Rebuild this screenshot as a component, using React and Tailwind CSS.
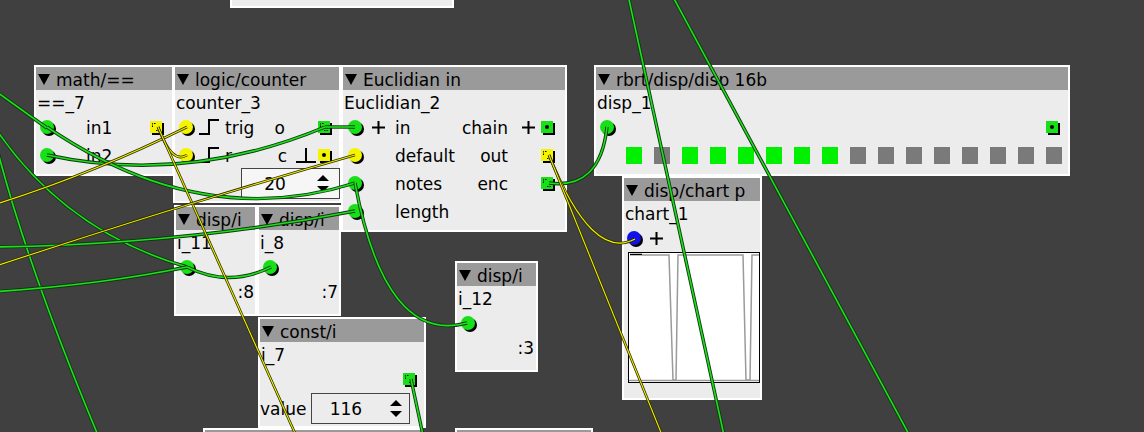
import React from "react";

const GREEN = "bg-[#18e018]";

function Tri() {
  return (
    <svg width="12" height="11" viewBox="0 0 12 11" className="ml-[2px] shrink-0 relative top-[1px]">
      <polygon points="0,0 12,0 6,11" fill="#000" />
    </svg>
  );
}

function T({ children, cls = "" }) {
  return <span className={"relative top-[1px] whitespace-nowrap " + cls}>{children}</span>;
}

function Node({ pos, title, name, children }) {
  return (
    <div className={"absolute flex flex-col bg-[#ececec] border-2 border-white " + pos}>
      <div className="h-[23px] shrink-0 bg-[#9a9a9a] flex items-center whitespace-nowrap overflow-hidden">
        <Tri />
        <span className="ml-[6px] relative top-[2px]">{title}</span>
      </div>
      <div className="h-[23px] shrink-0 flex items-center pl-[1px] whitespace-nowrap">
        <span className="relative top-[2px]">{name}</span>
      </div>
      {children}
    </div>
  );
}

function Inlet({ c }) {
  return <span className={"block w-[14px] h-[14px] rounded-full shrink-0 shadow-[2px_2px_0_#000] " + c} />;
}

function Outlet({ c, dot, cls = "" }) {
  return (
    <span className={"flex items-center justify-center w-[12px] h-[12px] shrink-0 shadow-[2px_2px_0_#000] " + c + " " + cls}>
      {dot ? (
        <span className="block w-[4px] h-[4px] rounded-full bg-black" />
      ) : (
        <svg width="12" height="12" viewBox="0 0 12 12">
          <path d="M2.5 6 V2.5 H6 M6 9.5 H9.5 V6" stroke="#000" strokeWidth="1" fill="none" strokeDasharray="1.5 1" />
        </svg>
      )}
    </span>
  );
}

function Plus({ cls = "" }) {
  return (
    <svg width="13" height="13" viewBox="0 0 13 13" className={"shrink-0 " + cls}>
      <path d="M6.5 0 V13 M0 6.5 H13" stroke="#000" strokeWidth="2" />
    </svg>
  );
}

function StepUp({ cls = "" }) {
  return (
    <svg width="20" height="16" viewBox="0 0 20 16" className={"shrink-0 " + cls}>
      <path d="M0 15 H10 V1 H20" stroke="#000" strokeWidth="2" fill="none" />
    </svg>
  );
}

function StepDown({ cls = "" }) {
  return (
    <svg width="20" height="16" viewBox="0 0 20 16" className={"shrink-0 " + cls}>
      <path d="M0 15 H20 M10 15 V1" stroke="#000" strokeWidth="2" fill="none" />
    </svg>
  );
}

function Arrows() {
  return (
    <svg width="12" height="17" viewBox="0 0 12 17" className="shrink-0">
      <polygon points="0,6 6,0 12,6" fill="#000" />
      <polygon points="0,11 6,17 12,11" fill="#000" />
    </svg>
  );
}

const squares = [1, 0, 1, 1, 1, 1, 1, 1, 0, 0, 0, 0, 0, 0, 0, 0];

function Wire({ d, yellow }) {
  return yellow ? (
    <g>
      <path d={d} stroke="#2a2a00" strokeWidth="2.6" fill="none" />
      <path d={d} stroke="#f0f000" strokeWidth="1.1" fill="none" />
    </g>
  ) : (
    <g>
      <path d={d} stroke="#0b3a0b" strokeWidth="3.4" fill="none" />
      <path d={d} stroke="#20dd20" strokeWidth="1.6" fill="none" />
    </g>
  );
}

const greenWires = [
  "M -20 80 L 47 128",
  "M -10 120 Q 60 230 187 267",
  "M -10 120 Q 20 250 100 440",
  "M 47 155 Q 186 185 325 127",
  "M 47 127 Q 201 232 355 183",
  "M 325 127 L 355 127",
  "M 355 211 Q 180 245 -10 247",
  "M 355 183 Q 385 345 467 323",
  "M 187 267 Q 229 288 271 267",
  "M -10 292 Q 100 285 187 267",
  "M 549 183 Q 600 190 607 127",
  "M 411 379 L 424 440",
  "M 628 -5 L 725 440",
  "M 672 -5 L 912 440",
];

const yellowWires = [
  "M -10 206 Q 90 175 187 127",
  "M 158 127 Q 172 165 187 155",
  "M 158 127 L 298 440",
  "M 355 155 Q 180 205 -10 268",
  "M 549 155 Q 592 262 635 239",
  "M 549 155 L 664 440",
];

export default function App() {
  return (
    <div className="relative w-[1144px] h-[432px] overflow-hidden bg-[#404040] text-[17px] leading-none text-black font-['DejaVu_Sans',sans-serif]">
      {/* partial boxes at edges */}
      <div className="absolute left-[230px] top-[-93px] w-[224px] h-[101px] bg-[#ececec] border-2 border-white" />
      <div className="absolute left-[203px] top-[428px] w-[220px] h-[60px] bg-[#ececec] border-2 border-white">
        <div className="h-[23px] bg-[#9a9a9a]" />
      </div>
      <div className="absolute left-[455px] top-[428px] w-[138px] h-[60px] bg-[#ececec] border-2 border-white">
        <div className="h-[23px] bg-[#9a9a9a]" />
      </div>

      {/* math/== */}
      <Node pos="left-[34px] top-[65px] w-[140px] h-[111px]" title="math/==" name="==_7">
        <div className="h-[28px] shrink-0 flex items-center pl-[4px] pr-[10px]">
          <Inlet c={GREEN} />
          <T cls="ml-[32px]">in1</T>
          <span className="flex-1" />
          <Outlet c="bg-[#f4f400]" />
        </div>
        <div className="h-[28px] shrink-0 flex items-center pl-[4px] pr-[10px]">
          <Inlet c={GREEN} />
          <T cls="ml-[32px]">in2</T>
        </div>
      </Node>

      {/* logic/counter */}
      <Node pos="left-[173px] top-[65px] w-[168px] h-[138px]" title="logic/counter" name="counter_3">
        <div className="h-[28px] shrink-0 flex items-center pl-[4px] pr-[9px]">
          <Inlet c="bg-[#f4f400]" />
          <StepUp cls="ml-[6px]" />
          <T cls="ml-[6px]">trig</T>
          <span className="flex-1" />
          <T>o</T>
          <Outlet c={GREEN} cls="ml-[33px]" />
        </div>
        <div className="h-[28px] shrink-0 flex items-center pl-[4px] pr-[9px]">
          <Inlet c="bg-[#f4f400]" />
          <StepUp cls="ml-[6px]" />
          <T cls="ml-[6px]">r</T>
          <span className="flex-1" />
          <T>c</T>
          <StepDown cls="ml-[9px]" />
          <Outlet c="bg-[#f4f400]" dot cls="ml-[2px]" />
        </div>
        <div className="h-[32px] -mt-[2px] shrink-0 flex items-center pl-[66px]">
          <div className="flex items-center h-[31px] w-[99px] shrink-0 border border-[#444] bg-[#f6f6f6]">
            <T cls="w-[66px] text-center">20</T>
            <span className="ml-[9px] flex"><Arrows /></span>
          </div>
        </div>
      </Node>

      {/* Euclidian in */}
      <Node pos="left-[341px] top-[65px] w-[226px] h-[167px]" title="Euclidian in" name="Euclidian_2">
        <div className="h-[28px] shrink-0 flex items-center pl-[5px] pr-[12px]">
          <Inlet c={GREEN} />
          <Plus cls="ml-[10px]" />
          <T cls="ml-[10px]">in</T>
          <span className="flex-1" />
          <T>chain</T>
          <Plus cls="ml-[14px]" />
          <Outlet c={GREEN} dot cls="ml-[6px]" />
        </div>
        <div className="h-[28px] shrink-0 flex items-center pl-[5px] pr-[12px]">
          <Inlet c="bg-[#f4f400]" />
          <span className="w-[13px] ml-[10px]" />
          <T cls="ml-[10px]">default</T>
          <span className="flex-1" />
          <T>out</T>
          <span className="w-[13px] ml-[14px]" />
          <Outlet c="bg-[#f4f400]" cls="ml-[6px]" />
        </div>
        <div className="h-[28px] shrink-0 flex items-center pl-[5px] pr-[12px]">
          <Inlet c={GREEN} />
          <span className="w-[13px] ml-[10px]" />
          <T cls="ml-[10px]">notes</T>
          <span className="flex-1" />
          <T>enc</T>
          <span className="w-[13px] ml-[14px]" />
          <Outlet c={GREEN} cls="ml-[6px]" />
        </div>
        <div className="h-[28px] shrink-0 flex items-center pl-[5px] pr-[12px]">
          <Inlet c={GREEN} />
          <span className="w-[13px] ml-[10px]" />
          <T cls="ml-[10px]">length</T>
        </div>
      </Node>

      {/* rbrt/disp/disp 16b */}
      <Node pos="left-[594px] top-[65px] w-[476px] h-[111px]" title="rbrt/disp/disp 16b" name="disp_1">
        <div className="h-[28px] shrink-0 flex items-center pl-[4px] pr-[10px]">
          <Inlet c={GREEN} />
          <span className="flex-1" />
          <Outlet c={GREEN} dot />
        </div>
        <div className="h-[28px] shrink-0 flex items-center pl-[30px] gap-[12px]">
          {squares.map((s, i) => (
            <span key={i} className={s ? "block w-[16px] h-[17px] bg-[#00f000]" : "block w-[16px] h-[17px] bg-[#7a7a7a]"} />
          ))}
        </div>
      </Node>

      {/* disp/chart p */}
      <Node pos="left-[622px] top-[176px] w-[140px] h-[224px]" title="disp/chart p" name="chart_1">
        <div className="h-[28px] shrink-0 flex items-center pl-[3px]">
          <Inlet c="bg-[#1010e8]" />
          <Plus cls="ml-[9px]" />
        </div>
        <div className="ml-[4px] w-[132px] h-[131px] shrink-0 border border-black bg-white">
          <svg width="130" height="129" viewBox="0 0 130 129">
            <polyline
              points="13,2 40,2 44,127 47,127 49,2 114,2 117,127 121,127 123,2 130,2"
              stroke="#9a9a9a"
              strokeWidth="1.5"
              fill="none"
            />
            <line x1="0" y1="127.5" x2="130" y2="127.5" stroke="#9a9a9a" strokeWidth="1.5" />
            <line x1="1" y1="1.5" x2="13" y2="1.5" stroke="#000" strokeWidth="1.5" />
          </svg>
        </div>
      </Node>

      {/* disp/i i_11 */}
      <Node pos="left-[174px] top-[205px] w-[83px] h-[111px]" title="disp/i" name="i_11">
        <div className="h-[28px] shrink-0 flex items-center pl-[4px]">
          <Inlet c={GREEN} />
        </div>
        <div className="h-[20px] shrink-0 flex items-center justify-end pr-[1px]"><T>:8</T></div>
      </Node>

      {/* disp/i i_8 */}
      <Node pos="left-[257px] top-[205px] w-[84px] h-[111px]" title="disp/i" name="i_8">
        <div className="h-[28px] shrink-0 flex items-center pl-[4px]">
          <Inlet c={GREEN} />
        </div>
        <div className="h-[20px] shrink-0 flex items-center justify-end pr-[1px]"><T>:7</T></div>
      </Node>

      {/* disp/i i_12 */}
      <Node pos="left-[455px] top-[261px] w-[83px] h-[111px]" title="disp/i" name="i_12">
        <div className="h-[28px] shrink-0 flex items-center pl-[4px]">
          <Inlet c={GREEN} />
        </div>
        <div className="h-[20px] shrink-0 flex items-center justify-end pr-[2px]"><T>:3</T></div>
      </Node>

      {/* const/i */}
      <Node pos="left-[258px] top-[317px] w-[168px] h-[111px]" title="const/i" name="i_7">
        <div className="h-[28px] shrink-0 flex items-center justify-end pr-[9px]">
          <Outlet c={GREEN} />
        </div>
        <div className="h-[31px] shrink-0 flex items-center">
          <T>value</T>
          <div className="ml-[5px] flex items-center h-[31px] w-[99px] shrink-0 border border-[#444] bg-[#ececec]">
            <T cls="w-[67px] text-center">116</T>
            <span className="ml-[11px] flex"><Arrows /></span>
          </div>
        </div>
      </Node>

      {/* wires */}
      <svg className="absolute left-0 top-0 pointer-events-none" width="1144" height="432" viewBox="0 0 1144 432">
        {greenWires.map((d, i) => (
          <Wire key={"g" + i} d={d} />
        ))}
        {yellowWires.map((d, i) => (
          <Wire key={"y" + i} d={d} yellow />
        ))}
      </svg>
    </div>
  );
}
